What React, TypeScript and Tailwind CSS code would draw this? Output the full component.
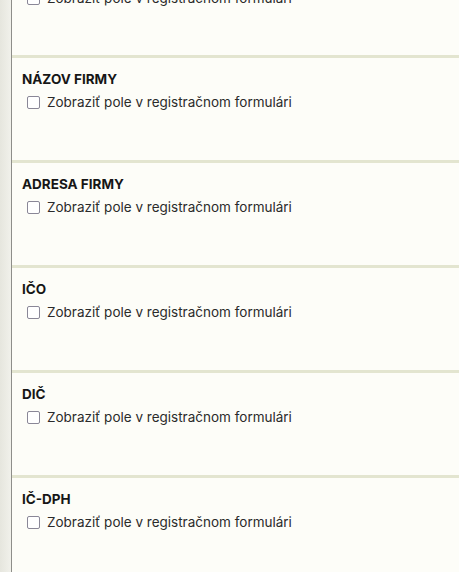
import React from 'react';

const fields = ['NÁZOV FIRMY', 'ADRESA FIRMY', 'IČO', 'DIČ', 'IČ-DPH'];

function Toggle() {
  return (
    <label className="flex items-center gap-[7px] text-[13.5px] leading-5 text-[#2b2b2b]">
      <span className="ml-[5px] w-[13px] h-[13px] rounded-[2px] border-[1.5px] border-[#8a8797] bg-white shrink-0" />
      <span>Zobraziť pole v registračnom formulári</span>
    </label>
  );
}

export default function App() {
  return (
    <div className="flex w-[459px] h-[572px] overflow-hidden bg-[#fdfdf8]" style={{ fontFamily: 'Inter, "Noto Sans", sans-serif' }}>
      <div className="w-[12px] shrink-0 bg-gradient-to-r from-[#e6e6de] to-[#f1f1eb] border-r border-[#8e8e8a]" />
      <div className="flex-1 flex flex-col">
        {/* previous field, cut at the top */}
        <div className="h-[67px] shrink-0 px-[10px] -mt-[12px]">
          <Toggle />
        </div>
        {fields.map((name) => (
          <div key={name} className="h-[105px] shrink-0 border-t-[3px] border-[#e3e5d0] px-[10px] pt-[11px]">
            <div className="text-[13.5px] leading-5 font-bold text-[#161616]">{name}</div>
            <div className="mt-[3px]">
              <Toggle />
            </div>
          </div>
        ))}
      </div>
    </div>
  );
}
